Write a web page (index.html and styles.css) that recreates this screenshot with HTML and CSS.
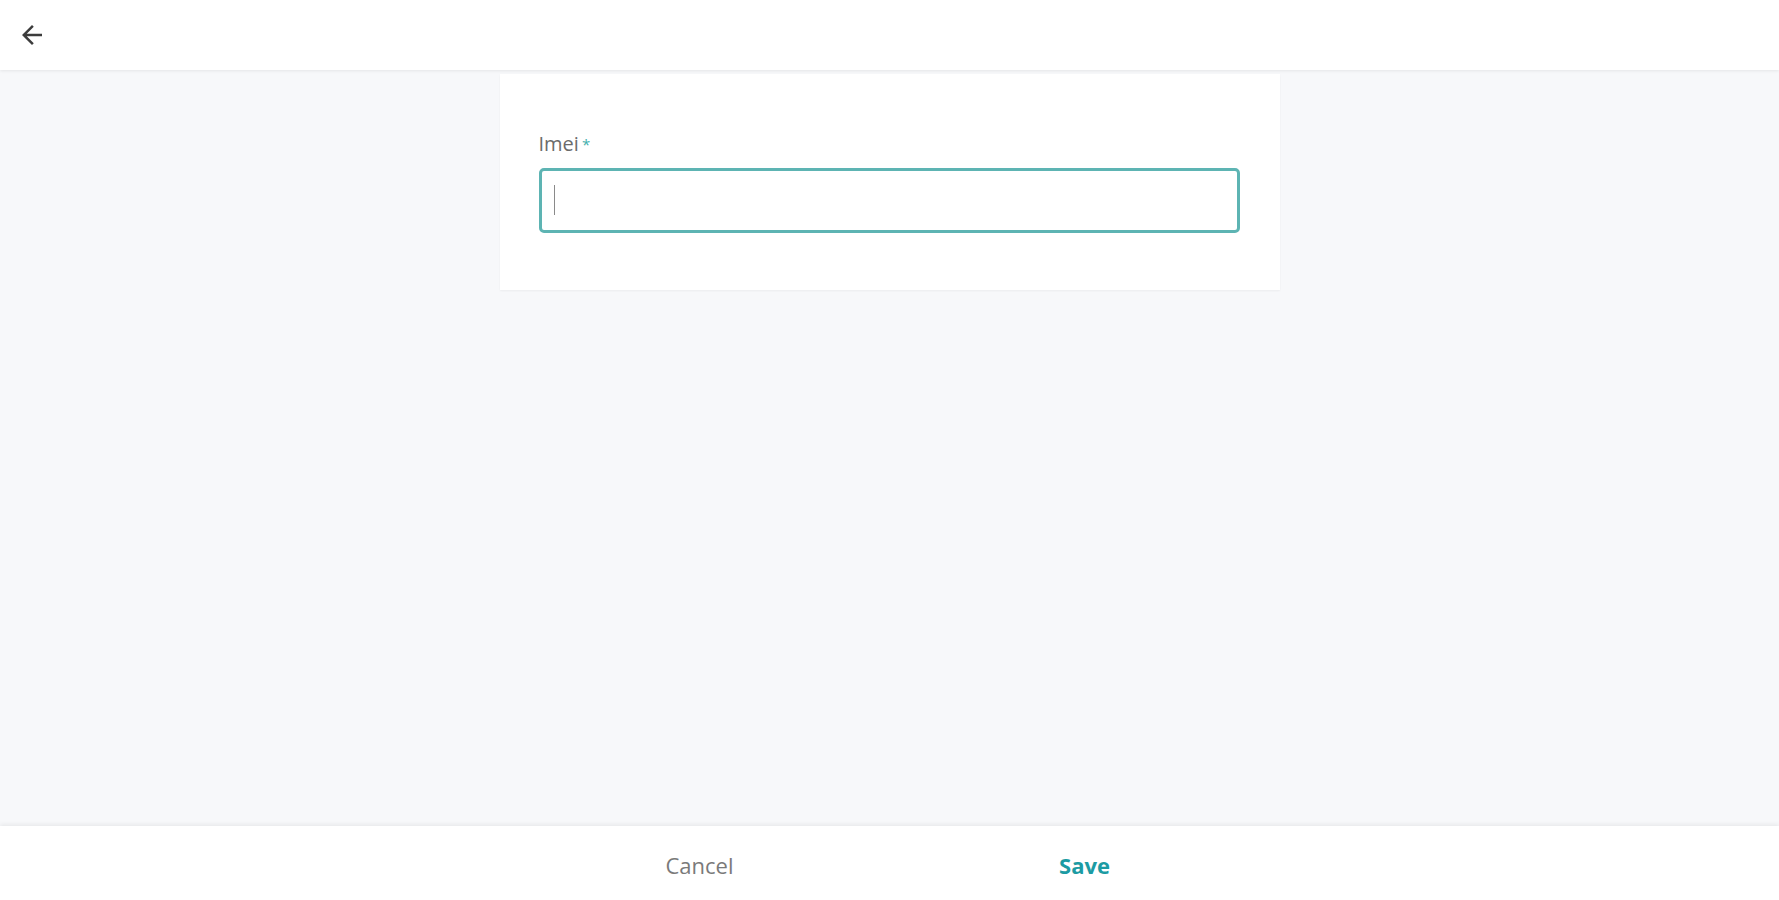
FILE: index.html
```html
<!DOCTYPE html>
<html lang="en">
<head>
  <meta charset="UTF-8" />
  <meta name="viewport" content="width=device-width, initial-scale=1.0"/>
  <title>Imei</title>
  <link rel="stylesheet" href="styles.css">
</head>
<body>
  <header class="top-bar">
    <button class="back-btn" type="button" aria-label="Back">
      <svg viewBox="0 0 24 24" width="30" height="30"><path d="M20 11H7.83l5.59-5.59L12 4l-8 8 8 8 1.41-1.41L7.83 13H20v-2z" fill="#3c3c3c"/></svg>
    </button>
  </header>

  <main class="content">
    <div class="form-card">
      <label class="field-label" for="imei">Imei<span class="required">*</span></label>
      <div class="field-box">
        <input type="text" id="imei" class="field-input" />
        <span class="caret"></span>
      </div>
    </div>
  </main>

  <footer class="bottom-bar">
    <div class="actions">
      <button class="action cancel" type="button">Cancel</button>
      <button class="action save" type="button">Save</button>
    </div>
  </footer>
</body>
</html>
```

FILE: styles.css
```css
body {
  margin: 0;
  height: 100vh;
  display: flex;
  flex-direction: column;
  background-color: #f7f8fa;
  font-family: 'Open Sans', sans-serif;
}
.top-bar {
  height: 70px;
  flex-shrink: 0;
  background-color: #fff;
  box-shadow: 0 1px 3px rgba(0,0,0,0.08);
  display: flex;
  align-items: center;
  padding-left: 17px;
  position: relative;
  z-index: 1;
}
.back-btn {
  border: none;
  background: none;
  padding: 0;
  display: flex;
  cursor: pointer;
}
.content {
  flex: 1;
  display: flex;
  justify-content: center;
  align-items: flex-start;
  padding-top: 4px;
}
.form-card {
  width: 780px;
  box-sizing: border-box;
  background-color: #fff;
  padding: 57px 40px 57px 39px;
  box-shadow: 0 1px 2px rgba(0,0,0,0.05);
}
.field-label {
  display: block;
  font-size: 20px;
  line-height: 26px;
  color: #6b6b6b;
  margin-bottom: 11px;
}
.required {
  color: #3fb0ad;
  font-size: 15px;
  vertical-align: top;
  margin-left: 3px;
}
.field-box {
  position: relative;
}
.field-input {
  width: 100%;
  height: 65px;
  box-sizing: border-box;
  border: 3px solid #5db4b3;
  border-radius: 5px;
  outline: none;
  padding: 0 14px;
  font-size: 18px;
  font-family: 'Open Sans', sans-serif;
  caret-color: transparent;
}
.caret {
  position: absolute;
  left: 15px;
  top: 17px;
  width: 1px;
  height: 30px;
  background-color: #8a8a8a;
}
.bottom-bar {
  height: 74px;
  flex-shrink: 0;
  background-color: #fff;
  box-shadow: 0 -2px 4px rgba(0,0,0,0.06);
  display: flex;
  justify-content: center;
  align-items: center;
  padding-top: 4px;
  box-sizing: border-box;
}
.actions {
  width: 780px;
  display: grid;
  grid-template-columns: 1fr 1fr;
}
.action {
  border: none;
  background: none;
  font-family: 'Open Sans', sans-serif;
  font-size: 22px;
  cursor: pointer;
}
.cancel {
  color: #7a7a7a;
  padding-left: 16px;
}
.save {
  color: #1c9ba3;
  font-weight: 700;
}
```
